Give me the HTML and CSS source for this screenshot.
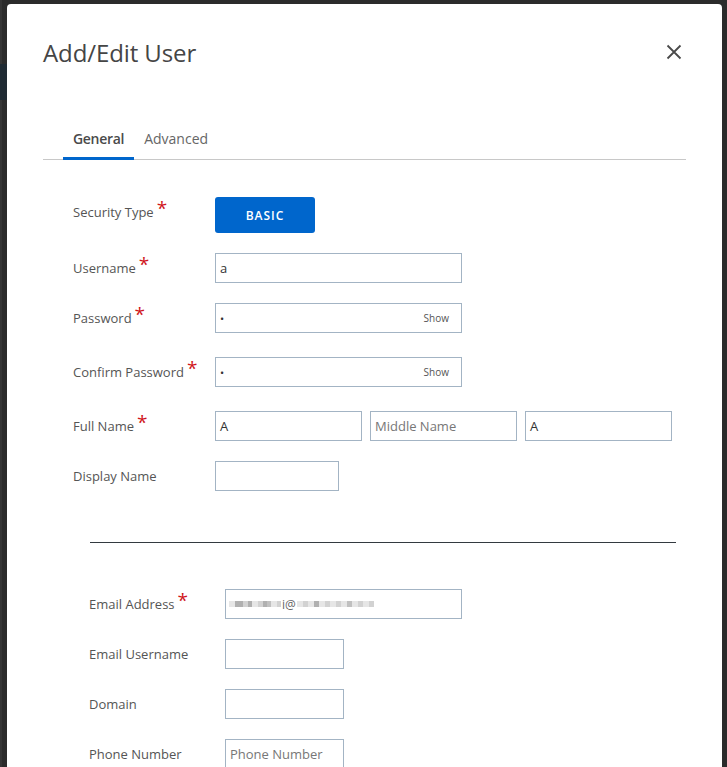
FILE: index.html
```html
<!DOCTYPE html>
<html>
<head>
<meta charset="utf-8">
<link rel="stylesheet" href="styles.css">
</head>
<body>
<div class="backdrop">
  <div class="band"></div>
  <div class="dialog">
    <div class="header">
      <h1 class="title">Add/Edit User</h1>
      <button class="close" aria-label="Close">
        <svg width="16" height="16" viewBox="0 0 16 16"><path d="M1.5 1.5 L14.5 14.5 M14.5 1.5 L1.5 14.5" stroke="#4a4a4a" stroke-width="1.8" fill="none"/></svg>
      </button>
    </div>
    <div class="tabs">
      <div class="tab active">General</div>
      <div class="tab">Advanced</div>
    </div>
    <div class="section">
      <div class="row row-sec">
        <div class="label">Security Type<span class="req">*</span></div>
        <button class="btn-basic">BASIC</button>
      </div>
      <div class="row r-user">
        <div class="label">Username<span class="req">*</span></div>
        <div class="input w-lg">a</div>
      </div>
      <div class="row r-pass">
        <div class="label">Password<span class="req">*</span></div>
        <div class="input w-lg pw"><span class="dot">•</span><span class="show">Show</span></div>
      </div>
      <div class="row r-cpass">
        <div class="label">Confirm Password<span class="req">*</span></div>
        <div class="input w-lg pw"><span class="dot">•</span><span class="show">Show</span></div>
      </div>
      <div class="row r-name">
        <div class="label">Full Name<span class="req">*</span></div>
        <div class="names">
          <div class="input w-name">A</div>
          <div class="input w-name ph">Middle Name</div>
          <div class="input w-name">A</div>
        </div>
      </div>
      <div class="row r-disp">
        <div class="label">Display Name</div>
        <div class="input w-disp"></div>
      </div>
    </div>
    <div class="divider"></div>
    <div class="section2">
      <div class="row2 r-email">
        <div class="label2">Email Address<span class="req">*</span></div>
        <div class="input w-email"><span class="blur"><i class="px c w6"></i><i class="px b w8"></i><i class="px a w5"></i><i class="px b w4"></i><i class="px c w6"></i><i class="px a w5"></i><i class="px b w4"></i><i class="px d w4"></i><i class="px c w6"></i><i class="px a w4"></i><span class="at">i@</span><i class="px c w6"></i><i class="px a w5"></i><i class="px c w6"></i><i class="px b w5"></i><i class="px c w6"></i><i class="px a w5"></i><i class="px c w6"></i><i class="px a w5"></i><i class="px c w6"></i><i class="px d w5"></i><i class="px c w6"></i><i class="px a w5"></i><i class="px c w6"></i><i class="px a w5"></i></span></div>
      </div>
      <div class="row2">
        <div class="label2">Email Username</div>
        <div class="input w-sm"></div>
      </div>
      <div class="row2">
        <div class="label2">Domain</div>
        <div class="input w-sm"></div>
      </div>
      <div class="row2">
        <div class="label2">Phone Number</div>
        <div class="input w-sm ph">Phone Number</div>
      </div>
    </div>
  </div>
</div>
</body>
</html>
```

FILE: styles.css
```css
* { box-sizing: border-box; }
html, body {
  margin: 0;
  padding: 0;
  height: 100%;
  overflow: hidden;
}
body {
  background: #2c2c2c;
  font-family: "Open Sans", "Liberation Sans", sans-serif;
}
.backdrop {
  position: relative;
  height: 767px;
  padding: 4px 5px 0 7px;
  background: linear-gradient(to right, #353535 0, #353535 2px, #2b2b2b 2px);
}
.band {
  position: absolute;
  left: 0;
  top: 64px;
  width: 7px;
  height: 36px;
  background: #1f2a33;
}
.dialog {
  position: relative;
  background: #fff;
  border-radius: 4px 4px 0 0;
  height: 800px;
  padding: 0 36px;
}
.header {
  display: flex;
  justify-content: space-between;
  align-items: center;
  height: 96px;
}
.title {
  margin: 0;
  font-weight: 400;
  font-size: 24px;
  color: #454545;
  letter-spacing: -0.1px;
}
.close {
  border: 0;
  background: none;
  padding: 0;
  width: 16px;
  height: 16px;
  margin-right: 4px;
  display: flex;
}
.tabs {
  display: flex;
  padding-left: 20px;
  margin-top: 19px;
  border-bottom: 1px solid #c8c8c8;
}
.tab {
  font-size: 14px;
  color: #666;
  padding: 0 10px;
  height: 40px;
  line-height: 40px;
}
.tab.active {
  color: #4a4a4a;
  font-weight: 600;
  letter-spacing: -0.3px;
  border-bottom: 3px solid #0066cc;
  margin-bottom: -1px;
  height: 41px;
}
.section {
  padding-left: 30px;
  padding-top: 31px;
}
.row {
  display: flex;
  align-items: center;
}
.label {
  width: 142px;
  flex: none;
  font-size: 13px;
  color: #555;
}
.req {
  color: #d0161b;
  font-size: 19px;
  line-height: 0;
  margin-left: 3px;
  position: relative;
  top: -2px;
}
.btn-basic {
  width: 100px;
  height: 36px;
  border: 0;
  border-radius: 3px;
  background: #0066cc;
  color: #fff;
  font-family: "Open Sans", sans-serif;
  font-weight: 600;
  font-size: 12px;
  letter-spacing: 1px;
  padding: 0;
  margin-top: 6px;
}
.r-user { margin-top: 20px; }
.r-pass { margin-top: 20px; }
.r-cpass { margin-top: 24px; }
.r-name { margin-top: 24px; }
.r-disp { margin-top: 20px; }
.input {
  height: 30px;
  border: 1px solid #a3b4c4;
  font-size: 13px;
  color: #333;
  padding: 0 4px;
  display: flex;
  align-items: center;
}
.ph { color: #777; }
.w-lg { width: 247px; }
.w-name { width: 147px; }
.w-disp { width: 124px; }
.w-email { width: 237px; }
.w-sm { width: 119px; }
.names { display: flex; gap: 8px; }
.pw { justify-content: space-between; }
.dot { font-size: 11px; }
.show { font-size: 10px; color: #555; margin-right: 8px; }
.divider {
  margin: 51px 10px 0 47px;
  border-top: 1px solid #333a40;
}
.section2 {
  padding-left: 46px;
  padding-top: 46px;
  display: flex;
  flex-direction: column;
  gap: 20px;
}
.row2 {
  display: flex;
  align-items: center;
}
.label2 {
  width: 136px;
  flex: none;
  font-size: 13px;
  color: #555;
}
.blur {
  display: flex;
  align-items: center;
  height: 10px;
  margin-left: -1px;
}
.px {
  display: inline-block;
  height: 6px;
}
.w4 { width: 4px; }
.w5 { width: 5px; }
.w6 { width: 6px; }
.w8 { width: 8px; }
.px.a { background: #d2d2d2; }
.px.b { background: #b0b0b0; }
.px.c { background: #e6e6e6; }
.px.d { background: #c0c0c0; }
.at { font-size: 12px; color: #666; font-style: normal; margin: 0 1px; }
```
